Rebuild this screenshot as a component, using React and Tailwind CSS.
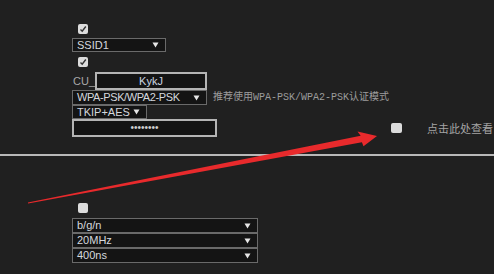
import React from "react";

const Tri = () => (
  <svg width="7" height="6" viewBox="0 0 7 6" className="shrink-0">
    <polygon points="0.5,0.5 6.5,0.5 3.5,5.5" fill="#e6e6e6" />
  </svg>
);

function Sel({ w, h, label, tight }) {
  return (
    <div
      className={`flex items-center justify-between border border-[#6a6a6a] bg-[#141414] pl-[4px] pr-[6px] ${w} ${h}`}
    >
      <span
        className={`text-[11px] leading-none text-[#d4d8de] ${tight ? "tracking-[-0.4px]" : ""}`}
      >
        {label}
      </span>
      <Tri />
    </div>
  );
}

function Check({ checked, cls = "w-[10px] h-[10px]" }) {
  return (
    <div className={`ml-[6px] ${cls} rounded-[2px] bg-[#dcdcdc] flex items-center justify-center`}>
      {checked && (
        <svg width="8" height="8" viewBox="0 0 8 8">
          <polyline points="1.5,4.5 3.2,6.2 6.8,1.5" fill="none" stroke="#333" strokeWidth="1.4" />
        </svg>
      )}
    </div>
  );
}

export default function App() {
  return (
    <div
      className="relative w-[494px] h-[274px] overflow-hidden bg-[#202020] flex flex-col"
      style={{ fontFamily: '"Liberation Sans", Arial, sans-serif' }}
    >
      <div className="flex flex-col items-start pl-[72px] pt-[24px]">
        <Check checked />
        <div className="mt-[4px]">
          <Sel w="w-[94px]" h="h-[14px]" label="SSID1" />
        </div>
        <div className="mt-[5px]">
          <Check checked />
        </div>
        <div className="mt-[5px] flex items-center h-[18px]">
          <span className="w-[23px] pl-[1px] text-[11px] text-[#a8a8a8] leading-none">CU_</span>
          <div className="w-[112px] h-[18px] border-2 border-[#b4b4b4] bg-[#141414] flex items-center justify-center">
            <span className="text-[11px] leading-none text-[#cbd5e1]">KykJ</span>
          </div>
        </div>
        <div className="flex items-center">
          <Sel w="w-[135px]" h="h-[15px]" label="WPA-PSK/WPA2-PSK" tight />
          <span
            className="ml-[6px] text-[10px] leading-none text-[#9c9c9c]"
            style={{ fontFamily: '"Liberation Mono", "Noto Sans CJK SC", monospace' }}
          >
            推荐使用WPA-PSK/WPA2-PSK认证模式
          </span>
        </div>
        <Sel w="w-[75px]" h="h-[14px]" label="TKIP+AES" />
        <div className="flex items-center">
          <div className="w-[145px] h-[18px] border-2 border-[#b4b4b4] bg-[#141414] flex items-center justify-center">
            <span className="text-[10px] leading-none text-[#d0d0d0]">••••••••</span>
          </div>
          <div className="ml-[168px]">
            <Check cls="w-[11px] h-[10px]" />
          </div>
          <span
            className="ml-[25px] text-[11px] leading-none text-[#a4a4a4]"
            style={{ fontFamily: '"Noto Sans CJK SC", sans-serif' }}
          >
            点击此处查看
          </span>
        </div>
      </div>
      <div className="mt-[17px] h-[2px] w-full bg-[#b8b8b8]" />
      <div className="flex flex-col items-start pl-[72px] mt-[47px]">
        <Check />
        <div className="mt-[5px] flex flex-col">
          <Sel w="w-[186px]" h="h-[15px]" label="b/g/n" />
          <Sel w="w-[186px]" h="h-[15px]" label="20MHz" />
          <Sel w="w-[186px]" h="h-[15px]" label="400ns" />
        </div>
      </div>
      <svg className="absolute left-0 top-0 pointer-events-none" width="494" height="274" viewBox="0 0 494 274">
        <polygon
          points="27.9,202.4 360.7,135.8 357.5,131.5 377,136 363.5,146.2 361.9,142.2 28.1,203.6"
          fill="#e82a2c"
        />
      </svg>
    </div>
  );
}
